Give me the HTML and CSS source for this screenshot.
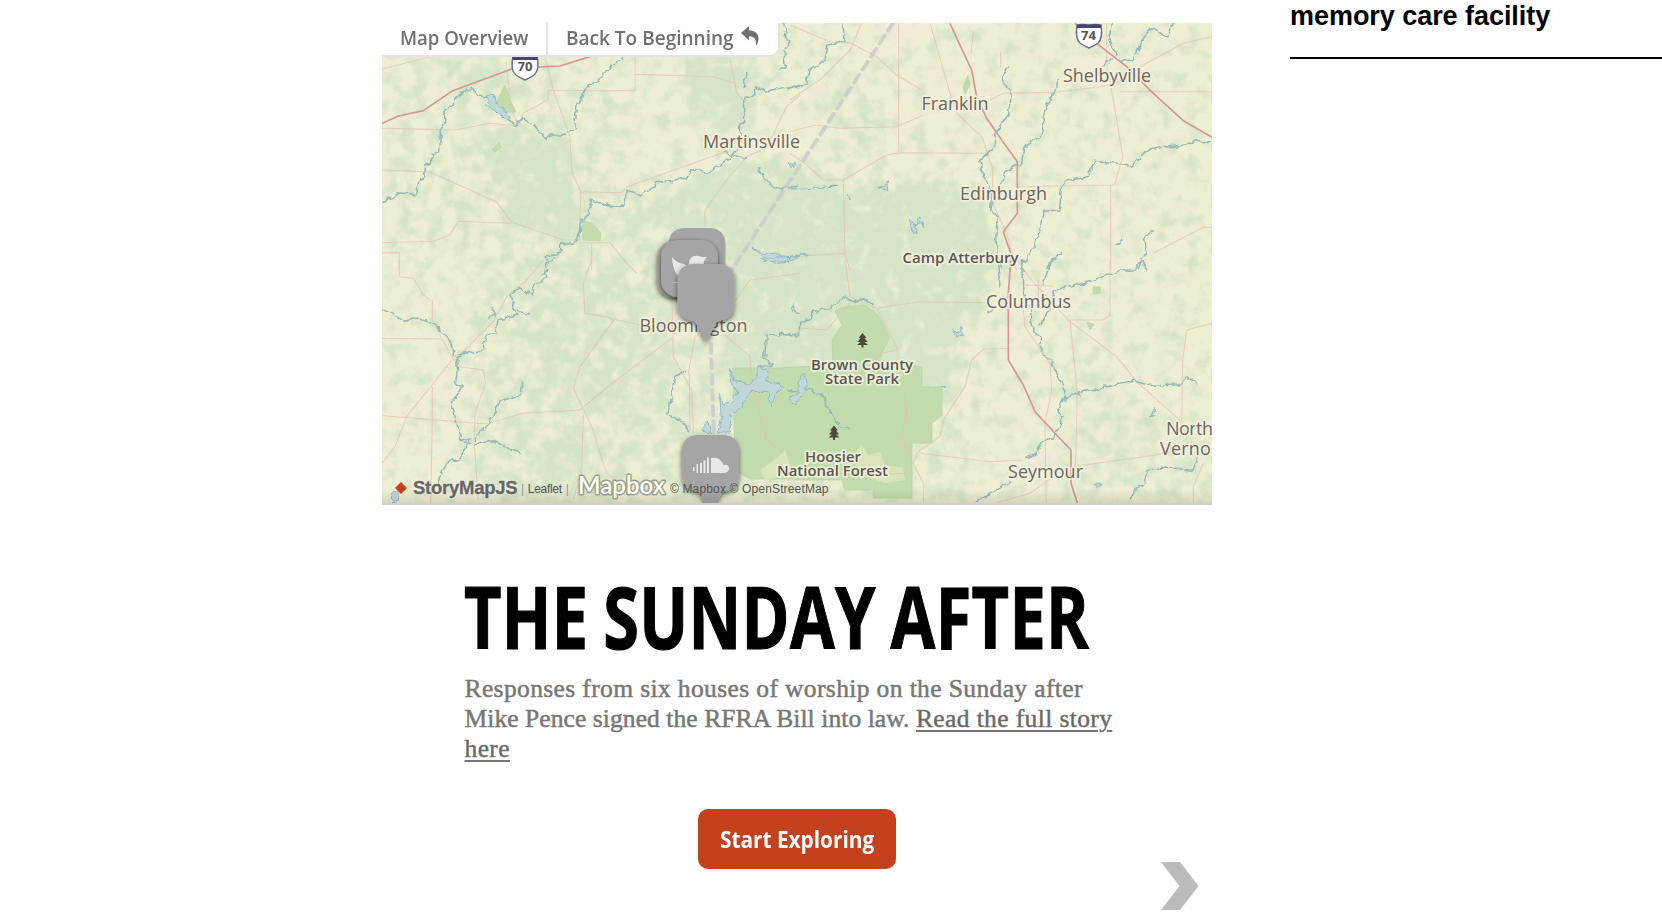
FILE: index.html
```html
<!DOCTYPE html>
<html lang="en">
<head>
<meta charset="utf-8">
<title>The Sunday After</title>
<link rel="stylesheet" href="styles.css">
</head>
<body>
<div class="page">
<main class="storymap">
<section class="map">
<svg class="map-canvas" viewBox="382 23 830 480" width="830" height="480">
<defs>
<filter id="woods" x="382" y="23" width="830" height="480" filterUnits="userSpaceOnUse" color-interpolation-filters="sRGB">
<feGaussianBlur in="SourceGraphic" stdDeviation="7" result="density"/>
<feTurbulence type="fractalNoise" baseFrequency="0.07" numOctaves="4" seed="11"/>
<feColorMatrix values="0 0 0 0 0 0 0 0 0 0 0 0 0 0 0 0 0 0 1 0" result="noise"/>
<feComposite in="noise" in2="density" operator="arithmetic" k2="1" k3="0.5"/>
<feComponentTransfer result="mask"><feFuncA type="linear" slope="2.8" intercept="-1.66"/></feComponentTransfer>
<feFlood flood-color="#d5e4c6"/>
<feComposite in2="mask" operator="in"/>
</filter>
<filter id="wiggle" x="-5%" y="-5%" width="110%" height="110%">
<feTurbulence type="fractalNoise" baseFrequency="0.045" numOctaves="2" seed="3"/>
<feDisplacementMap in="SourceGraphic" scale="30" xChannelSelector="R" yChannelSelector="G" color-interpolation-filters="sRGB"/>
</filter>
<filter id="shade" x="-30%" y="-30%" width="160%" height="160%"><feDropShadow dx="0" dy="2" stdDeviation="2.5" flood-color="#000" flood-opacity=".6"/></filter>
<linearGradient id="fade" x1="0" y1="0" x2="0" y2="1"><stop offset="0" stop-color="#000" stop-opacity="0"/><stop offset="1" stop-color="#000" stop-opacity=".1"/></linearGradient>
<path id="pin" d="M17 0H40Q57 0 57 17V40Q57 55 40 57L28.500 78L17 57Q0 55 0 40V17Q0 0 17 0Z"/>
<g id="tree"><path d="M0-7L4-2H2L5 2H2L5.500 5H1V7.500H-1V5H-5.500L-2 2H-5L-2-2H-4Z"/></g>
</defs>
<rect x="382" y="23" width="830" height="480" fill="#eeeed3"/>
<g filter="url(#woods)">
<path fill-opacity=".24" d="M382 23H1212V503H382Z"/>
<path fill-opacity=".26" d="M382 50L560 55L640 120L600 200L560 270L382 250Z"/>
<path fill-opacity=".36" d="M470 280L640 190L830 190L960 300L960 503H470Z"/>
<path fill-opacity=".95" d="M485 130L560 130L580 180L590 235L540 235L500 215L505 180L485 165Z"/>
<path fill-opacity=".9" d="M690 55L765 50L755 105L735 140L700 120L685 95Z"/>
<path fill-opacity=".8" d="M640 200L735 165L750 205L710 230L640 225L600 240Z"/>
<path fill-opacity="1" d="M725 165L800 165L840 190L930 180L985 190L1000 265L965 330L945 410L840 370L740 390L720 330L725 240Z"/>
<path fill-opacity=".5" d="M535 270L650 270L680 320L660 400L560 420L500 503H640L590 440L530 360Z"/>
<path fill-opacity=".6" d="M448 55L510 60L520 95L480 110Z"/>
<path fill-opacity=".3" d="M1070 330L1130 400L1212 440V503H1060Z"/>
<path fill-opacity=".3" d="M820 40L900 130L880 170L830 160Z"/>
</g>
<g class="parks">
<path d="M835 311L845 307L865 305L878 315L890 338L884 348L878 360L922 367V387H942V416L932 423V443H912V498H873V490H845L842 480H794V479H750L735 470L733 368H780L833 365L832 340L842 325Z"/>
<path d="M583 221L592 223L601 233L600 241L583 240Z"/><path d="M505 85L510 100L516 112L500 112L497 102Z"/><path d="M492 150L499 143L501 147L495 152Z"/><path d="M968 75L970 85L965 94L963 88Z"/><path d="M1093 287H1100V293L1093 294ZM1087 322L1094 324L1090 330Z"/>
</g>
<path fill="#e8ebc0" opacity=".6" d="M850 460L862 444L868 455L880 452L885 465L903 468L905 480L885 483L870 478ZM760 470L772 462L785 450L790 465L795 475L765 480Z"/>
<g class="towns"><path d="M865 23H925L915 50L890 45ZM930 55L945 80L938 110L925 85ZM742 150L760 150L750 162ZM1015 278L1050 285L1060 310L1030 300ZM1085 55L1115 62L1120 90L1095 88ZM1025 455L1055 450L1065 478L1035 480Z"/></g>

<g transform="translate(380 20) scale(.33333)">
<g class="road"><path d="M6 147L150 110M382 150L390 250L415 320M495 110L520 210L570 350L575 455L603 515L596 660M505 208L503 240L430 280L415 318L328 310L225 330L6 325M505 210L690 213L765 210V110M765 163L1000 170L1065 190L1070 220L1100 250M1050 120L1065 190M6 450L150 456L350 546L395 606L550 660L600 660M6 668L160 664L210 645L235 604L395 610M603 515L725 518L740 500L840 465L1045 392M1260 225L1220 260L1190 320L1165 380L1100 410L1040 480L975 570V620M600 668H690L740 730L770 760M6 698H58V750M635 670V750"/></g>
<path class="highway" d="M6 310L55 288L130 272L215 214L400 145L540 138L630 110"/>
<g class="stream"><path d="M12 550L30 540L45 543L60 528L115 530L125 490L140 480L143 440L160 435L162 410L185 400L187 340L200 320V290L215 265L230 265V245L280 208L300 235L335 235L355 245M385 300L415 325L435 300L465 320M470 320L505 365L520 350L565 352L595 330L590 290L625 210L660 190L690 155L745 110M1260 205L1200 215L1165 222L1130 205L1130 230L1100 245V310L1088 325L1085 380L1060 420L1030 440L990 463L940 455L925 480L835 495L830 510L790 530L745 520L740 565L720 570L640 550L635 590L610 610L607 645L590 678H548V705L505 718L508 750M1110 165L1100 185L1102 210M1215 10L1225 50L1235 75L1220 100L1225 150L1205 155M1140 445L1160 485L1200 512L1260 505M1040 400L1055 415L1110 420"/></g>
<path class="lake" d="M330 235L350 230L360 260L385 280L400 310L355 285L330 265ZM1125 690L1160 710L1195 705L1225 720L1260 712V725L1220 735L1160 728Z"/>
</g>
<g transform="translate(790 20) scale(.33333)">
<g class="road"><path d="M0 15L120 65L180 68L260 110L320 165L395 210M326 10V400M0 335L75 315L150 325L320 320L400 285M420 10L480 220L500 280L575 350L608 445V550L650 640L680 750M0 400L45 430L100 480H160L165 700L180 750M160 480L290 405L330 398L590 400M600 240L640 220L800 217L970 195L1060 135L1180 70L1266 50M950 10V130L975 270L998 410L975 490L962 500V750M685 500L970 495M215 10L180 90L95 175L0 240M990 215H1266M550 35L543 100M632 95V145M0 710L165 700M1090 700L1240 622L1266 622"/></g>
<path class="highway" d="M480 10L505 65L545 150L560 230L590 295L635 360L682 425V580L640 635L662 700V750M855 10L885 35L920 70L1010 140L1090 220L1180 302L1266 352"/>
<g class="stream"><path d="M165 10L168 70L120 85L110 130L70 155L50 200L0 215M660 145L640 190L670 220L665 285L635 330L620 350L623 385L575 430L590 480L610 520L608 575L630 600L625 680L640 750M815 180L805 220L780 260L765 300L770 340L710 390L705 430L650 465L640 500M1266 375L1220 365L1200 380L1110 390L1075 400L1035 445L920 430L905 475L835 490L820 510L815 575L770 580L740 680L705 745M975 10L965 65L985 110L950 145M1160 10L1140 60L1090 32L1060 70L1040 125L1000 130M1100 640L1070 660L1075 705L1050 750M825 700L790 730L780 750M0 512L100 510L150 500M0 720L55 712M180 530L190 548M275 510L300 498"/></g>
<path class="lake" d="M365 600L375 640L390 650L380 620L395 615L410 630L395 600L385 620ZM275 510L305 490L300 520L285 508ZM988 680L1005 662L995 680ZM0 435L25 430L5 450Z"/>
</g>
<g transform="translate(380 260) scale(.33333)">
<g class="road"><path d="M58 0V50L100 55L130 105L157 125V180L185 235L215 290L240 320L310 330L317 370L285 460L282 540L295 720M6 235L185 237M240 270L80 470L45 560L6 610M6 467L320 492L430 460L600 450L690 375L875 235M490 0L440 60L380 110L340 185L240 285M635 0L610 70L615 160L680 170L700 182L600 320L580 385L635 500L680 640L750 690M610 465L605 620L580 720M690 175L890 220M157 380V470L152 728M875 60L880 290L935 390L940 520M928 340L930 520M945 230L925 340M1260 40L1110 60L1060 130M1040 230L1110 290L1120 390L1160 540L1210 580"/></g>
<g class="stream"><path d="M535 0L508 20L490 75L465 80L460 110L430 90L400 105L405 140L420 175L360 185L355 225L320 235V275L270 285L235 300L240 350L235 380L255 385L240 410L220 435L235 490L250 550L275 545L250 600L210 615L185 660L180 680M6 148L80 190L120 180L180 205L220 250L230 295M285 550L340 490L365 430L430 410L435 370M290 560L345 548L430 590M420 160L455 170M335 185L350 150M925 340L890 360L880 420L870 470L910 490L935 520M1250 230L1165 230L1160 300L1185 320L1140 330"/></g>
<path class="lake" d="M1058 335L1070 370L1115 380L1140 355V325L1170 340L1165 370L1195 375L1215 390L1190 415L1180 445L1170 400L1120 400L1090 450L1060 465L1060 525H1020L1030 480L1025 410L1040 440L1060 435L1080 405L1060 375ZM970 520L985 490L1000 505L1005 525ZM1150 0L1175 15L1235 10L1220 0ZM255 550L275 542L275 560ZM40 710L60 700L58 728H45Z"/>
</g>
<g transform="translate(790 260) scale(.33333)">
<g class="road"><path d="M165 0L180 110L260 145L390 125L590 128M0 230L40 205L110 210L180 130M260 145L325 270L275 280L270 320M655 265L580 268L545 300L525 380L460 480L450 530L385 575L370 610L400 670V728M390 580L600 605L700 600M700 140L705 200L780 310L785 390L765 490L768 728M680 0L720 55L840 185L980 290L1040 365L1180 490M960 0V165L940 180H840L862 400L858 570L855 640M845 620L1100 585L1210 545M700 75L790 78M745 60V120M1266 190L1190 210L1178 300L1175 490M1240 610L1210 680V728M0 650L370 640M345 400L350 470L330 530L365 590M845 610L720 700L620 728"/></g>
<path class="highway" d="M662 0L655 100V300L700 375L735 455L800 525L843 570V670L862 728"/>
<g class="stream"><path d="M700 0L705 100L725 145L735 215L755 240L765 285L790 310L810 350L835 415L810 460L825 480L800 540L760 555L750 585L705 600M835 418L890 400L1040 370L1100 385L1175 380L1200 360L1230 380M560 728L600 715L670 670M795 0L765 80M1080 40L1060 5L1040 35L990 40L920 65L870 80L800 100L775 180L755 205M0 235L35 230V190L70 185L75 160L130 150L165 120L200 135L220 120L260 140M0 400L60 395L110 415L120 450L145 495L185 515M1230 600L1215 640L1130 630L1080 640L1070 680L1035 700L1030 728M630 0L640 90"/></g>
<path class="lake" d="M0 425L30 410L35 370L50 350L55 385L45 410L25 435ZM495 210L510 225L520 205L530 235L505 238ZM600 165L630 145L615 160ZM1090 480L1105 445L1105 465ZM915 680L940 675L930 690ZM460 385L475 390L470 395ZM20 140L28 170L15 150Z"/>
</g>

<path class="route" d="M893 23L706 309.500"/><path class="route" d="M711 344L714 440"/>
<g class="shield"><path d="M513 56H537Q540 70 534 75Q530 78 525 80Q520 78 516 75Q510 70 513 56Z"/><path class="shield-top" d="M512.500 55H537.500V60H512.500Z"/><text x="517.500" y="71" textLength="15" lengthAdjust="spacingAndGlyphs">70</text>
<path d="M1077 25Q1082 24 1089 25Q1096 24 1101 25Q1103 39 1098 43Q1094 46 1089 48Q1084 46 1080 43Q1075 39 1077 25Z"/><path class="shield-top" d="M1077 25Q1082 23.500 1089 25Q1096 23.500 1101 25V28H1077Z"/><text x="1081" y="40" textLength="15" lengthAdjust="spacingAndGlyphs">74</text></g>
<g class="city">
<text x="703" y="147.500" textLength="97">Martinsville</text><text x="921.500" y="110" textLength="67">Franklin</text><text x="1063" y="81.500" textLength="88">Shelbyville</text><text x="960" y="200" textLength="87">Edinburgh</text><text x="986" y="308" textLength="85">Columbus</text><text x="639.500" y="332" textLength="108">Bloomington</text><text x="1008" y="478" textLength="75">Seymour</text><text x="1166" y="435" textLength="47">North</text><text x="1160" y="454.500" textLength="62">Vernon</text>
</g>
<g class="place">
<text x="902.500" y="262.500" textLength="116" lengthAdjust="spacingAndGlyphs">Camp Atterbury</text>
<text x="811" y="369.500" textLength="102" lengthAdjust="spacingAndGlyphs">Brown County</text><text x="825" y="384" textLength="74" lengthAdjust="spacingAndGlyphs">State Park</text><text x="805" y="461.500" textLength="56" lengthAdjust="spacingAndGlyphs">Hoosier</text><text x="777" y="476" textLength="111" lengthAdjust="spacingAndGlyphs">National Forest</text>
</g>
<g fill="#4f4737"><use href="#tree" x="862.500" y="340"/><use href="#tree" x="834" y="432.500"/></g>
<g class="pins">
<use href="#pin" x="668.500" y="228"/>
<rect x="657" y="241" width="57" height="57" rx="17" filter="url(#shade)"/>
<g filter="url(#shade)"><rect x="661" y="240" width="57" height="57" rx="17"/></g>
<path class="glyph" d="M672 257Q677 263 684 264L689 267C688 259 692 255 698 256L703 257L707 257L704 261L703 269L698 281H686L678 276C674 272 672 263 672 257ZM672 282Q680 285 690 280V283Z"/>
<g filter="url(#shade)"><use href="#pin" x="677.500" y="264"/></g>
<g filter="url(#shade)"><use href="#pin" x="682" y="435"/></g>
<path class="glyph" d="M693 467h1.500v4h-1.500zM696.500 464h1.500v9h-1.500zM700 463h2v10h-2zM703.500 460.500h2v12.500h-2zM707 457.500h2V473h-2zM711 458Q720 456 723.500 465Q729 464 729 469Q728 473 724 473H711Z"/>
</g>
<rect x="382" y="489" width="830" height="14" fill="url(#fade)"/>
</svg>
<nav class="menubar">
<a class="menu-item overview"><span class="menu-label">Map Overview</span></a>
<a class="menu-item back"><span class="menu-label">Back To Beginning</span>
<svg class="back-icon" viewBox="0 0 18 20" width="18" height="20"><path d="M0 7L8 0V4.200C14 4.500 18 8 17.500 13Q17.300 17 15 20C15.500 14 14 10.500 8 10.300V14.500Z"/></svg></a>
</nav>
<footer class="credits">
<svg class="diamond" viewBox="0 0 12 12" width="12" height="12"><path d="M6 0L12 6L6 12L0 6Z"/></svg>
<b class="brand">StoryMapJS</b>
<span class="leaflet"><i>|</i> Leaflet <i>|</i></span>
<svg class="mapbox" width="93" height="31"><text x="3" y="21.500" textLength="87" lengthAdjust="spacingAndGlyphs">Mapbox</text></svg>
<span class="sources">© Mapbox © OpenStreetMap</span>
</footer>
</section>
<article class="story">
<h1 class="headline"><span>THE SUNDAY AFTER</span></h1>
<p class="summary">Responses from six houses of worship on the Sunday after<br><span class="lead">Mike Pence signed the RFRA Bill into law. </span><a>Read the full story<br>here</a></p>
<button class="start"><span>Start Exploring</span></button>
<svg class="next" viewBox="0 0 38 48" width="38" height="48"><path d="M0 0H19L37.500 24L19 48H0L18.500 24Z"/></svg>
</article>
</main>
<aside class="sidebar"><h2 class="related">memory care facility</h2></aside>
</div>
</body>
</html>
```
FILE: styles.css
```css
* { box-sizing: border-box; }
body { margin: 0; background: #fff; height: 914px; overflow: hidden; }
.page { display: flex; gap: 78px; padding-left: 382px; height: 914px; }
.storymap { width: 830px; flex: none; padding-top: 23px; }
.map { position: relative; height: 482px; border-bottom: 2px solid #cfcfcc; overflow: hidden; }
.map-canvas { display: block; }
.parks path { fill: #c3dcae; stroke: #b7d2a2; stroke-width: .7; }
.towns path { fill: #f4eadd; opacity: .5; }
.road path { fill: none; stroke: #e9bfae; stroke-width: 3.200; opacity: .72; stroke-linejoin: round; }
.highway { fill: none; stroke: #d99593; stroke-width: 5; stroke-linejoin: round; }
.stream, .lake { filter: url(#wiggle); }
.stream path { fill: none; stroke: #90b9bd; stroke-width: 4.500; stroke-linejoin: round; }
.lake { fill: #c1d8db; stroke: #8fb8c6; stroke-width: 3; }
.route { fill: none; stroke: #ccc; stroke-width: 4; stroke-dasharray: 9 6.500; stroke-linecap: round; opacity: .9; }
.shield path { fill: #fff; stroke: #6d6d8c; stroke-width: 1.500; }
.shield .shield-top { fill: #45466f; stroke: none; }
.shield text { font: 700 12px "Open Sans", sans-serif; fill: #555; }
.city text, .place text { font-family: "Open Sans", "Noto Sans", sans-serif; paint-order: stroke; stroke: #f3f2e2; stroke-opacity: .85; stroke-width: 3.500px; stroke-linejoin: round; }
.city text { font-size: 18px; fill: #70665a; }
.place text { font-size: 14px; font-weight: 600; fill: #5c574e; }
.pins { fill: #a5a5a5; }
.pins .glyph { fill: #e8e8e8; }
.menubar { position: absolute; left: 0; top: 0; display: flex; width: 398px; height: 34px; background: #fff; border-bottom: 2px solid #e3e3e0; border-right: 2px solid #e3e3e0; border-bottom-right-radius: 10px; color: #707070; font: 600 20.500px/28px "Open Sans", "Noto Sans", sans-serif; }
.menu-item { display: flex; height: 32px; white-space: nowrap; }
.overview { width: 166px; padding-left: 18px; border-right: 2px solid #e3e3e3; }
.back { padding-left: 18px; position: relative; }
.menu-label { display: inline-block; transform: scaleX(.905); transform-origin: 0 0; }
.back .menu-label { transform: scaleX(.928); }
.back-icon { position: absolute; left: 193px; top: 3px; fill: #707070; }
.credits { position: absolute; left: 13px; bottom: 0; height: 31px; display: flex; align-items: center; font: 12px/16px "Liberation Sans", Arial, sans-serif; color: #555; white-space: nowrap; }
.diamond { fill: #c5411d; margin-right: 6px; }
.brand { font-size: 18.500px; letter-spacing: -.25px; color: #666; width: 108px; text-shadow: 0 0 2px #fff; -webkit-text-stroke: .3px #666; }
.leaflet, .sources { position: relative; top: 1px; }
.leaflet { display: flex; gap: 4px; width: 54px; letter-spacing: -.3px; }
.leaflet i { font-style: normal; color: #999; }
.mapbox { flex: none; }
.mapbox text { font: 600 24px Lato, sans-serif; fill: #fff; stroke: #999e8c; stroke-width: 3px; paint-order: stroke; stroke-linejoin: round; }
.sources { letter-spacing: .15px; margin-left: 2px; }
.story { position: relative; height: 409px; padding: 67px 83px 0 82px; }
.headline { margin: 0; font: 700 86px/88px "Open Sans", "Noto Sans", sans-serif; white-space: nowrap; color: #000; -webkit-text-stroke: 1.200px #000; }
.headline span { display: inline-block; transform: scaleX(.754); transform-origin: 0 0; word-spacing: -3px; letter-spacing: .4px; }
.summary { margin: 14px 0 0; padding-left: .5px; font: 25.500px/30px "Liberation Serif", "Times New Roman", serif; color: #777; -webkit-text-stroke: .5px #777; white-space: nowrap; letter-spacing: .38px; }
.summary .lead { letter-spacing: .08px; }
.summary a { color: #666; text-decoration: underline; text-decoration-thickness: 2px; text-underline-offset: 3px; }
.start { display: flex; align-items: center; justify-content: center; width: 198px; height: 60px; margin: 45px 0 0 234px; padding: 0; border: 0; border-radius: 10px; background: #c5411e; color: #fff; font: 700 23.500px/30px "Open Sans", "Noto Sans", sans-serif; white-space: nowrap; }
.start span { transform: scaleX(.885); }
.next { position: absolute; right: 13px; top: 357px; fill: #bbb; }
.sidebar { flex: 1; height: 59px; border-bottom: 2px solid #000; }
.related { margin: 0; font: 700 27px/33px "Liberation Sans", Arial, sans-serif; letter-spacing: -.05px; white-space: nowrap; }
```
